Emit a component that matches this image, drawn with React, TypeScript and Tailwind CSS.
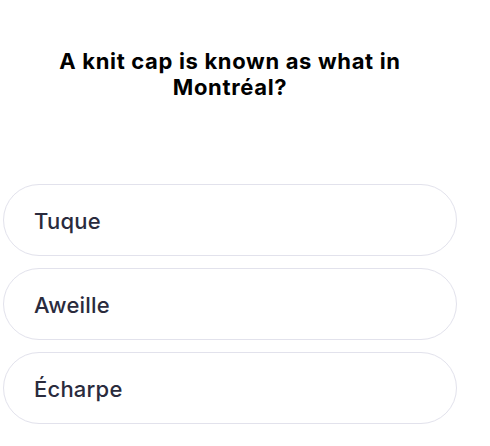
export default function App() {
  const answers = ['Tuque', 'Aweille', 'Écharpe'];

  return (
    <div className="min-h-screen bg-white" style={{ fontFamily: 'Inter, "Noto Sans", sans-serif' }}>
      <div className="w-[460px]">
        {/* Question */}
        <h1 className="mx-auto w-[400px] pt-[48px] text-center text-[22px] font-bold leading-[26px] tracking-[0.03em] text-black">
          A knit cap is known as what in Montréal?
        </h1>

        {/* Answer options */}
        <div className="mt-[84px] flex flex-col gap-[12px] px-[3px]">
          {answers.map((answer) => (
            <button
              key={answer}
              className="flex h-[72px] items-center rounded-full border border-[#e2e2ec] bg-white px-[30px] pt-[3px] text-left text-[22px] font-medium tracking-[0.01em] text-[#2a2b3d]"
            >
              {answer}
            </button>
          ))}
        </div>
      </div>
    </div>
  );
}
